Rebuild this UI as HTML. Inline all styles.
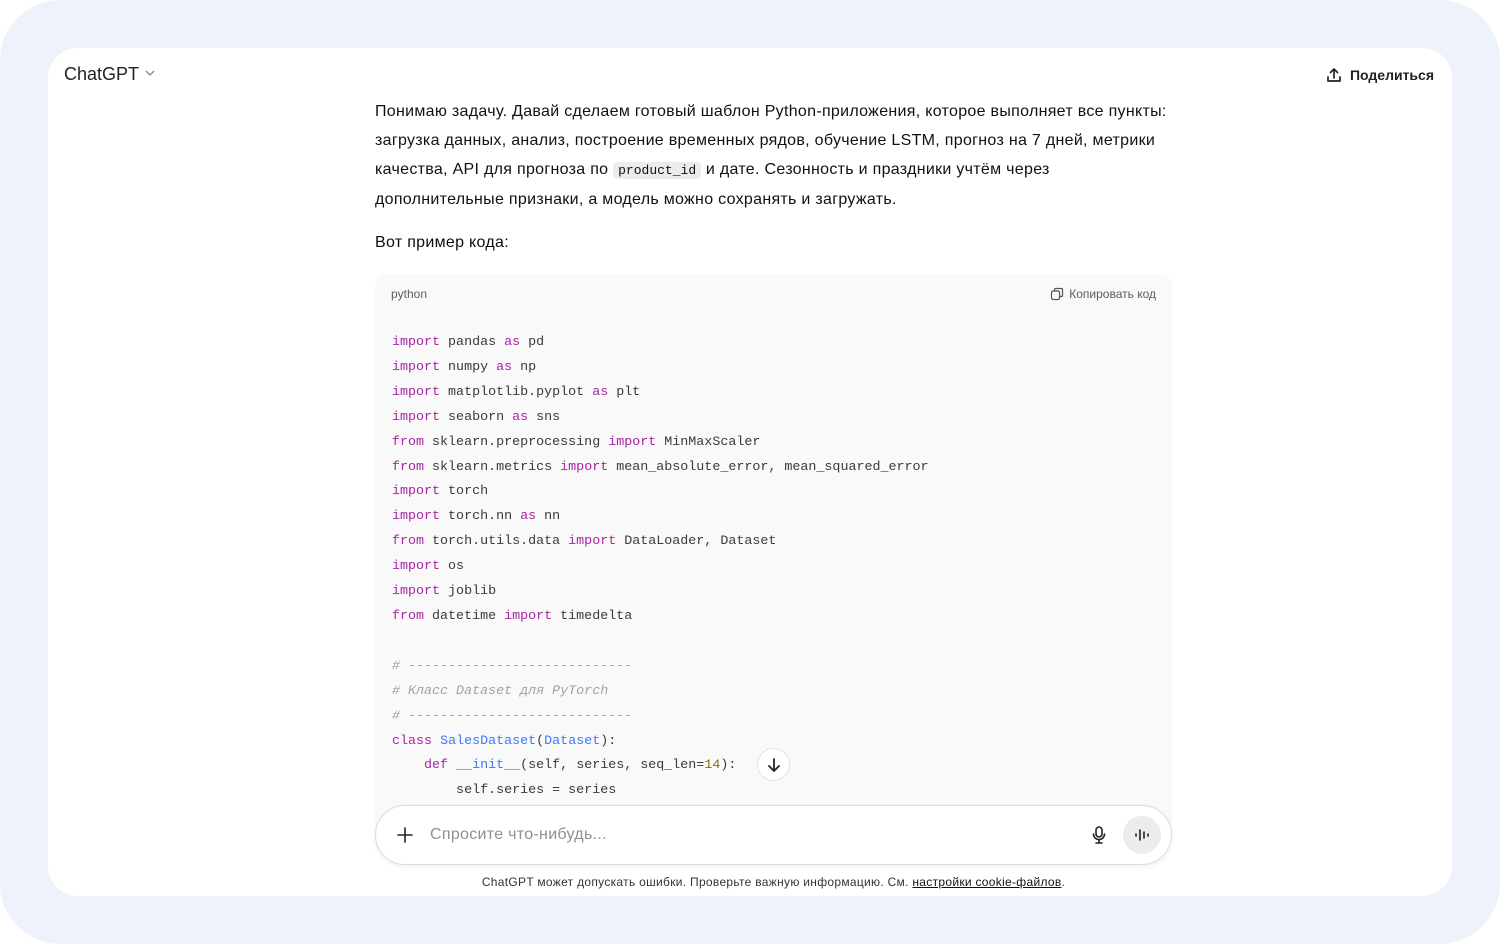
<!DOCTYPE html>
<html><head><meta charset="utf-8"><style>
*{margin:0;padding:0;box-sizing:border-box}
html,body{width:1500px;height:944px;overflow:hidden;background:#fff}
body{font-family:"Liberation Sans",sans-serif;color:#0d0d0d;position:relative}
.outer{position:absolute;left:0;top:0;width:1500px;height:944px;background:#eef3fb;border-radius:60px}
.panel{position:absolute;left:48px;top:48px;width:1404px;height:848px;background:#fff;border-radius:30px;overflow:hidden}
.title{position:absolute;left:16px;top:16px;font-size:18px;color:#222}
.share{position:absolute;right:18px;top:18px;font-size:14px;font-weight:bold;color:#222;display:flex;align-items:center;gap:7px}
.p{position:absolute;left:327px;top:49px;font-size:16px;line-height:29px;white-space:nowrap;letter-spacing:0.3px;color:#111}
.ic{font-family:"Liberation Mono",monospace;font-size:13px;background:#ececec;border-radius:4px;padding:1px 5px;letter-spacing:0}
.vot{position:absolute;left:327px;top:186px;font-size:16px;letter-spacing:0.3px}
.code{position:absolute;left:327px;top:226px;width:797px;height:560px;background:#f9f9f9;border-radius:12px 12px 0 0}
.lang{position:absolute;left:16px;top:13px;font-size:12px;color:#5d5d5d}
.copy{position:absolute;right:16px;top:13px;font-size:12px;color:#5d5d5d;display:flex;align-items:center;gap:5px}
pre{position:absolute;left:17px;top:57px;font-family:"Liberation Mono",monospace;font-size:13.35px;line-height:24.9px;color:#383a42}
.k{color:#a626a4}.b{color:#4078f2}.n{color:#986801}.c{color:#a0a1a7;font-style:italic}
.down{position:absolute;left:709px;top:700px;width:33px;height:33px;border-radius:50%;background:#fff;border:1px solid #e3e3e3;display:flex;align-items:center;justify-content:center}
.input{position:absolute;left:327px;top:757px;width:797px;height:60px;background:#fff;border:1px solid #dcdcdc;border-radius:30px;box-shadow:0 2px 6px rgba(0,0,0,.06)}
.ph{position:absolute;left:54px;top:20px;font-size:16px;color:#8f8f8f;letter-spacing:0.3px}
.plus{position:absolute;left:20px;top:16px}
.voice{position:absolute;right:10px;top:10px;width:38px;height:38px;border-radius:50%;background:#ececec;display:flex;align-items:center;justify-content:center}
.mic{position:absolute;right:63px;top:19px}
.foot{position:absolute;left:327px;width:797px;top:827px;text-align:center;font-size:12px;color:#333;letter-spacing:0.3px;white-space:nowrap}
.foot u{color:#111}
</style></head><body>
<div class="outer"></div>
<div class="panel">
<div class="title">ChatGPT <svg width="12" height="12" viewBox="0 0 12 12" style="vertical-align:1px"><path d="M2 4l4 4 4-4" fill="none" stroke="#888" stroke-width="1.3"/></svg></div>
<div class="share"><svg width="18" height="18" viewBox="0 0 18 18"><path d="M9 12V3M5.5 6.5L9 3l3.5 3.5M3 11v4h12v-4" fill="none" stroke="#222" stroke-width="1.7" stroke-linecap="round" stroke-linejoin="round"/></svg>Поделиться</div>
<div class="p">Понимаю задачу. Давай сделаем готовый шаблон Python-приложения, которое выполняет все пункты:<br>загрузка данных, анализ, построение временных рядов, обучение LSTM, прогноз на 7 дней, метрики<br>качества, API для прогноза по <span class="ic">product_id</span> и дате. Сезонность и праздники учтём через<br>дополнительные признаки, а модель можно сохранять и загружать.</div>
<div class="vot">Вот пример кода:</div>
<div class="code">
<div class="lang">python</div>
<div class="copy"><svg width="14" height="14" viewBox="0 0 14 14"><rect x="1.5" y="4" width="8" height="8.5" rx="1.5" fill="none" stroke="#555" stroke-width="1.2"/><path d="M4.5 4V2.5a1 1 0 011-1h6a1 1 0 011 1v6a1 1 0 01-1 1H9.5" fill="none" stroke="#555" stroke-width="1.2"/></svg>Копировать код</div>
<pre><span class="k">import</span> pandas <span class="k">as</span> pd
<span class="k">import</span> numpy <span class="k">as</span> np
<span class="k">import</span> matplotlib.pyplot <span class="k">as</span> plt
<span class="k">import</span> seaborn <span class="k">as</span> sns
<span class="k">from</span> sklearn.preprocessing <span class="k">import</span> MinMaxScaler
<span class="k">from</span> sklearn.metrics <span class="k">import</span> mean_absolute_error, mean_squared_error
<span class="k">import</span> torch
<span class="k">import</span> torch.nn <span class="k">as</span> nn
<span class="k">from</span> torch.utils.data <span class="k">import</span> DataLoader, Dataset
<span class="k">import</span> os
<span class="k">import</span> joblib
<span class="k">from</span> datetime <span class="k">import</span> timedelta

<span class="c"># ----------------------------</span>
<span class="c"># Класс Dataset для PyTorch</span>
<span class="c"># ----------------------------</span>
<span class="k">class</span> <span class="b">SalesDataset</span>(<span class="b">Dataset</span>):
    <span class="k">def</span> <span class="b">__init__</span>(self, series, seq_len=<span class="n">14</span>):
        self.series = series</pre>
</div>
<div class="down"><svg width="18" height="18" viewBox="0 0 18 18"><path d="M9 3v12M4 10l5 5 5-5" fill="none" stroke="#222" stroke-width="1.8" stroke-linecap="round" stroke-linejoin="round"/></svg></div>
<div class="input">
<svg class="plus" width="18" height="18" viewBox="0 0 18 18" style="top:20px"><path d="M9 2v14M2 9h14" stroke="#222" stroke-width="1.6" stroke-linecap="round"/></svg>
<div class="ph">Спросите что-нибудь...</div>
<svg class="mic" width="18" height="20" viewBox="0 0 18 20"><rect x="6" y="2" width="6" height="10" rx="3" fill="none" stroke="#222" stroke-width="1.6"/><path d="M3.5 9a5.5 5.5 0 0011 0M9 14.5V18M6 18h6" fill="none" stroke="#222" stroke-width="1.6" stroke-linecap="round"/></svg>
<div class="voice"><svg width="18" height="18" viewBox="0 0 18 18"><path d="M3 8v2M7 4v10M11 6v6M15 8v2" stroke="#222" stroke-width="1.6" stroke-linecap="round"/></svg></div>
</div>
<div class="foot">ChatGPT может допускать ошибки. Проверьте важную информацию. См. <u>настройки cookie-файлов</u>.</div>
</div>
</body></html>
